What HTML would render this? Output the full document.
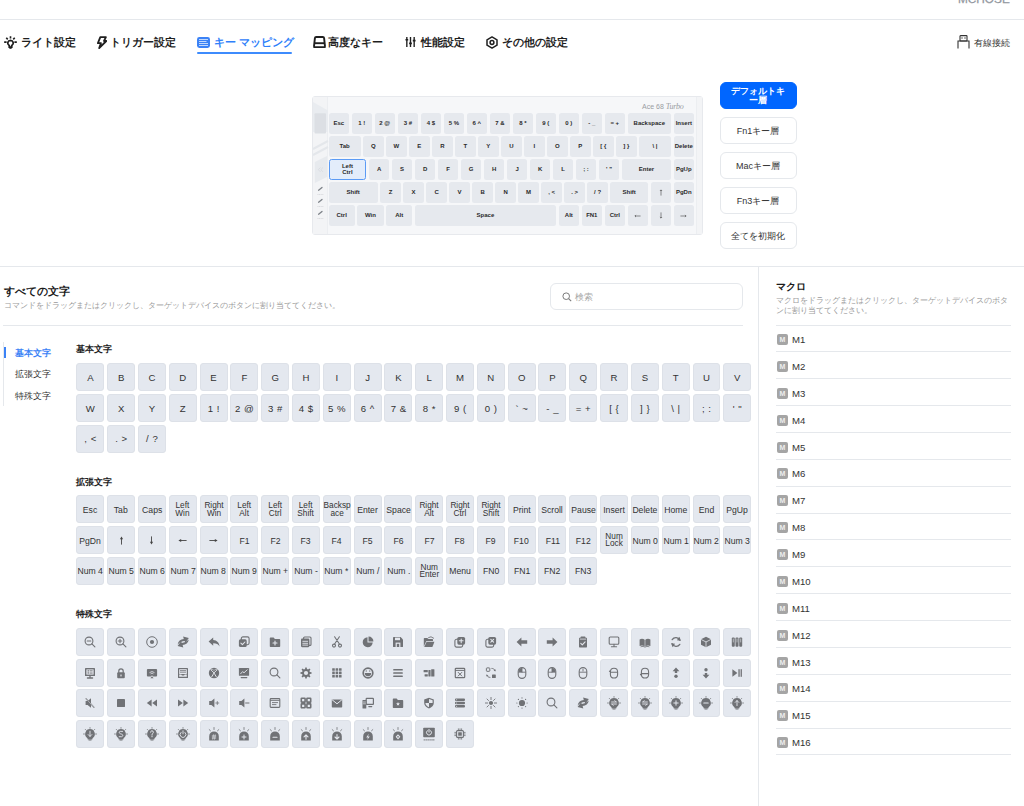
<!DOCTYPE html><html><head><meta charset="utf-8"><style>
*{box-sizing:border-box;margin:0;padding:0}
html,body{width:1024px;height:806px;overflow:hidden;background:#fff}
body{position:relative;font-family:"Liberation Sans",sans-serif;color:#222}
.abs{position:absolute}
.hl{position:absolute;height:1px;background:#e5e8ec}
.vl{position:absolute;width:1px;background:#e5e8ec}
.nav{position:absolute;top:34px;height:16px;font-size:10.8px;font-weight:bold;line-height:16px;white-space:nowrap;color:#1f1f1f}
.nav svg{position:absolute;top:2px;left:0}
.nav span{position:absolute;top:0}
.kb{position:absolute;left:312px;top:96px;width:391px;height:139px;background:#f6f7f9;border:1px solid #e7e9ed;border-radius:3px}
.kk{position:absolute;height:21px;background:#e6e9ee;border-radius:2.5px;font-size:6px;font-weight:bold;color:#2a2a2a;display:flex;align-items:center;justify-content:center;text-align:center;line-height:6.5px;white-space:nowrap}
.lbtn{position:absolute;left:719.5px;width:77px;height:27px;border:1px solid #e5e8ec;border-radius:6px;font-size:9px;color:#333;display:flex;align-items:center;justify-content:center;text-align:center;line-height:9px;background:#fff;padding-top:1.5px}
.lbtn.on{background:#0066ff;border-color:#0066ff;color:#fff;font-weight:bold;line-height:9.6px;padding-top:1px}
.key{position:absolute;width:27.9px;height:27.9px;background:#e4e8ef;border:1px solid #dde1e8;border-radius:3px;font-size:10px;color:#333;display:flex;align-items:center;justify-content:center;text-align:center;line-height:8.2px;white-space:nowrap}
.key .t{display:inline-block;transform:scaleX(.9);padding-top:1.5px;font-size:9.6px}
.key .t2{display:inline-block;font-size:8.6px;line-height:7.6px;padding-top:1px;transform:scaleX(.96)}
.kb9{font-size:10px}
.kb9 .t{transform:none;padding-top:1.5px;word-spacing:1px}
.key svg{display:block}
.sec{position:absolute;left:76px;font-size:9px;font-weight:bold;color:#222;line-height:10px}
.mac{position:absolute;left:776px;width:235px;height:26.8px;border-bottom:1px solid #e5e8ec}
.mac b{position:absolute;left:1px;top:8.5px;width:11px;height:11px;background:#a5a5a5;border-radius:2px;color:#eee;font-size:7px;line-height:11px;text-align:center;font-weight:bold}
.mac span{position:absolute;left:16px;top:8.5px;font-size:9.6px;line-height:12px;color:#333}
</style></head><body>
<div class="abs" style="left:958px;top:-6.6px;font-size:11.8px;line-height:12px;color:#91969e;font-weight:normal;-webkit-text-stroke:.25px #91969e;white-space:nowrap">MCHOSE</div>
<div class="hl" style="left:0;top:19px;width:1024px"></div>
<div class="nav" style="left:4px;color:#1f1f1f"><svg width="13" height="13" viewBox="0 0 16 16"><path d="M8 5.3a3.4 3.4 0 0 0-1.9 6.2c.3.2.4.5.4.9v1.3h3v-1.3c0-.4.1-.7.4-.9A3.4 3.4 0 0 0 8 5.3z" fill="none" stroke="#1f1f1f" stroke-width="2.2"/><path d="M6.6 14.8h2.8" stroke="#1f1f1f" stroke-width="2"/><path d="M8 .4v2.8M2.8 2.2l1.8 2M13.2 2.2l-1.8 2M.2 7.6h3M12.8 7.6h3" stroke="#1f1f1f" stroke-width="2"/></svg><span style="left:17px">ライト設定</span></div>
<div class="nav" style="left:96px;color:#1f1f1f"><svg width="11" height="13" viewBox="0 0 11 13"><path d="M4.3 1.1H9.9L8 5H10.3L3.2 12.1 4.9 7.2H1.9Z" fill="none" stroke="#1f1f1f" stroke-width="1.8" stroke-linejoin="round"/></svg><span style="left:14px">トリガー設定</span></div>
<div class="nav" style="left:197px;color:#2f80fa"><svg width="14" height="12" viewBox="0 0 14 12" style="top:3px"><rect x="0" y="0" width="13" height="11" rx="2.4" fill="#3b82f6"/><path d="M2 2.5h9M2 4.5h7.5M2 6.5h9M2 8.5h9" stroke="#dbe8fd" stroke-width=".85"/></svg><span style="left:17px">キー マッピング</span></div>
<div class="nav" style="left:313px;color:#1f1f1f"><svg width="13" height="12" viewBox="0 0 13 12"><path d="M3.2 1H9.8C10.6 1 11 1.4 11.1 2.2L12 10.4C12.1 11 11.8 11.2 11.3 11.2H1.7C1.2 11.2.9 11 1 10.4L1.9 2.2C2 1.4 2.4 1 3.2 1Z" fill="none" stroke="#1f1f1f" stroke-width="1.9"/><path d="M1.8 7.2H11.2" stroke="#1f1f1f" stroke-width="1.9"/></svg><span style="left:15px">高度なキー</span></div>
<div class="nav" style="left:405px;color:#1f1f1f"><svg width="11" height="12" viewBox="0 0 12 13"><path d="M2 1v11M6 1v11M10 1v11" stroke="#1f1f1f" stroke-width="1.5"/><path d="M.5 4h3M4.5 8h3M8.5 5h3" stroke="#1f1f1f" stroke-width="1.8"/></svg><span style="left:16px">性能設定</span></div>
<div class="nav" style="left:486px;color:#1f1f1f"><svg width="12" height="13" viewBox="0 0 12 13"><path d="M6 .9 11 3.8v5.4L6 12.1 1 9.2V3.8z" fill="none" stroke="#1f1f1f" stroke-width="1.5" stroke-linejoin="round"/><circle cx="6" cy="6.5" r="1.9" fill="none" stroke="#1f1f1f" stroke-width="1.5"/></svg><span style="left:16px">その他の設定</span></div>
<div class="abs" style="left:197px;top:52px;width:95px;height:2px;background:#3d8bfd;border-radius:1px"></div>
<div class="abs" style="left:957px;top:35px;width:13px;height:14px"><svg width="13" height="14" viewBox="0 0 13 14"><path d="M1 13.4V6H12v7.4" fill="none" stroke="#333" stroke-width="1.1"/><rect x="3" y=".6" width="7" height="5.4" rx=".6" fill="none" stroke="#333" stroke-width="1.1"/><rect x="4.4" y="2.4" width="1.2" height="1.2" fill="#333"/><rect x="7.4" y="2.4" width="1.2" height="1.2" fill="#333"/></svg></div>
<div class="abs" style="left:974px;top:36.5px;font-size:9.4px;line-height:12px;color:#333">有線接続</div>
<div class="kb">
<div class="abs" style="left:0;top:0;width:15px;height:137px;border-right:1px solid #eceef1;background:#f3f4f6"></div>
<svg class="abs" style="left:0;top:0" width="16" height="137" viewBox="0 0 16 137"><path d="M0 5 15 13.5V35H0z" fill="#e9ecf0"/><rect x="1.5" y="16.2" width="11.5" height="20.2" rx="1" fill="#dcdfe4"/><path d="M0 52 15 44M0 58 15 50" stroke="#e4e7eb" stroke-width="2"/><path d="M1.8 65 14 59V80L1.8 86z" fill="#e7eaee"/><path d="M7.5 70.5l-2.2 2.2 2.2 2.2M10 70.5l-2.2 2.2 2.2 2.2" stroke="#d6d9de" stroke-width=".7" fill="none"/><path d="M5.6 93.2l3.4-2.8M5.6 105.2l3.4-2.8M5.6 117.2l3.4-2.8" stroke="#7d8288" stroke-width="1.3" stroke-linecap="round"/><path d="M4.5 97.5h6M4.5 109.5h6M4.5 121.5h6" stroke="#cfd2d6" stroke-width=".8" stroke-dasharray="1 .6"/></svg>
<div class="kk" style="left:15.50px;top:15.80px;width:20.60px">Esc</div>
<div class="kk" style="left:38.50px;top:15.80px;width:20.60px">1 !</div>
<div class="kk" style="left:61.50px;top:15.80px;width:20.60px">2 @</div>
<div class="kk" style="left:84.50px;top:15.80px;width:20.60px">3 #</div>
<div class="kk" style="left:107.50px;top:15.80px;width:20.60px">4 $</div>
<div class="kk" style="left:130.50px;top:15.80px;width:20.60px">5 %</div>
<div class="kk" style="left:153.50px;top:15.80px;width:20.60px">6 ^</div>
<div class="kk" style="left:176.50px;top:15.80px;width:20.60px">7 &amp;</div>
<div class="kk" style="left:199.50px;top:15.80px;width:20.60px">8 *</div>
<div class="kk" style="left:222.50px;top:15.80px;width:20.60px">9 (</div>
<div class="kk" style="left:245.50px;top:15.80px;width:20.60px">0 )</div>
<div class="kk" style="left:268.50px;top:15.80px;width:20.60px">- _</div>
<div class="kk" style="left:291.50px;top:15.80px;width:20.60px">= +</div>
<div class="kk" style="left:314.50px;top:15.80px;width:43.60px">Backspace</div>
<div class="kk" style="left:360.50px;top:15.80px;width:20.60px">Insert</div>
<div class="kk" style="left:15.50px;top:38.88px;width:32.10px">Tab</div>
<div class="kk" style="left:50.00px;top:38.88px;width:20.60px">Q</div>
<div class="kk" style="left:73.00px;top:38.88px;width:20.60px">W</div>
<div class="kk" style="left:96.00px;top:38.88px;width:20.60px">E</div>
<div class="kk" style="left:119.00px;top:38.88px;width:20.60px">R</div>
<div class="kk" style="left:142.00px;top:38.88px;width:20.60px">T</div>
<div class="kk" style="left:165.00px;top:38.88px;width:20.60px">Y</div>
<div class="kk" style="left:188.00px;top:38.88px;width:20.60px">U</div>
<div class="kk" style="left:211.00px;top:38.88px;width:20.60px">I</div>
<div class="kk" style="left:234.00px;top:38.88px;width:20.60px">O</div>
<div class="kk" style="left:257.00px;top:38.88px;width:20.60px">P</div>
<div class="kk" style="left:280.00px;top:38.88px;width:20.60px">[ {</div>
<div class="kk" style="left:303.00px;top:38.88px;width:20.60px">] }</div>
<div class="kk" style="left:326.00px;top:38.88px;width:32.10px">\ |</div>
<div class="kk" style="left:360.50px;top:38.88px;width:20.60px">Delete</div>
<div class="kk" style="left:15.50px;top:61.96px;width:37.85px;background:#e3edfb;border:1px solid #5b9bf5">Left<br>Ctrl</div>
<div class="kk" style="left:55.75px;top:61.96px;width:20.60px">A</div>
<div class="kk" style="left:78.75px;top:61.96px;width:20.60px">S</div>
<div class="kk" style="left:101.75px;top:61.96px;width:20.60px">D</div>
<div class="kk" style="left:124.75px;top:61.96px;width:20.60px">F</div>
<div class="kk" style="left:147.75px;top:61.96px;width:20.60px">G</div>
<div class="kk" style="left:170.75px;top:61.96px;width:20.60px">H</div>
<div class="kk" style="left:193.75px;top:61.96px;width:20.60px">J</div>
<div class="kk" style="left:216.75px;top:61.96px;width:20.60px">K</div>
<div class="kk" style="left:239.75px;top:61.96px;width:20.60px">L</div>
<div class="kk" style="left:262.75px;top:61.96px;width:20.60px">; :</div>
<div class="kk" style="left:285.75px;top:61.96px;width:20.60px">&#x27; &quot;</div>
<div class="kk" style="left:308.75px;top:61.96px;width:49.35px">Enter</div>
<div class="kk" style="left:360.50px;top:61.96px;width:20.60px">PgUp</div>
<div class="kk" style="left:15.50px;top:85.04px;width:49.35px">Shift</div>
<div class="kk" style="left:67.25px;top:85.04px;width:20.60px">Z</div>
<div class="kk" style="left:90.25px;top:85.04px;width:20.60px">X</div>
<div class="kk" style="left:113.25px;top:85.04px;width:20.60px">C</div>
<div class="kk" style="left:136.25px;top:85.04px;width:20.60px">V</div>
<div class="kk" style="left:159.25px;top:85.04px;width:20.60px">B</div>
<div class="kk" style="left:182.25px;top:85.04px;width:20.60px">N</div>
<div class="kk" style="left:205.25px;top:85.04px;width:20.60px">M</div>
<div class="kk" style="left:228.25px;top:85.04px;width:20.60px">, &lt;</div>
<div class="kk" style="left:251.25px;top:85.04px;width:20.60px">. &gt;</div>
<div class="kk" style="left:274.25px;top:85.04px;width:20.60px">/ ?</div>
<div class="kk" style="left:297.25px;top:85.04px;width:37.85px">Shift</div>
<div class="kk" style="left:337.50px;top:85.04px;width:20.60px"><svg width="4" height="7" viewBox="0 0 4 7"><path d="M2 6.6V.9M.9 2 2 .9 3.1 2" fill="none" stroke="#444" stroke-width=".6"/></svg></div>
<div class="kk" style="left:360.50px;top:85.04px;width:20.60px">PgDn</div>
<div class="kk" style="left:15.50px;top:108.12px;width:26.35px">Ctrl</div>
<div class="kk" style="left:44.25px;top:108.12px;width:26.35px">Win</div>
<div class="kk" style="left:73.00px;top:108.12px;width:26.35px">Alt</div>
<div class="kk" style="left:101.75px;top:108.12px;width:141.35px">Space</div>
<div class="kk" style="left:245.50px;top:108.12px;width:20.60px">Alt</div>
<div class="kk" style="left:268.50px;top:108.12px;width:20.60px">FN1</div>
<div class="kk" style="left:291.50px;top:108.12px;width:20.60px">Ctrl</div>
<div class="kk" style="left:314.50px;top:108.12px;width:20.60px"><svg width="7" height="4" viewBox="0 0 7 4"><path d="M6.6 2H.9M2 .9.9 2 2 3.1" fill="none" stroke="#444" stroke-width=".6"/></svg></div>
<div class="kk" style="left:337.50px;top:108.12px;width:20.60px"><svg width="4" height="7" viewBox="0 0 4 7"><path d="M2 .4v5.7M.9 5 2 6.1 3.1 5" fill="none" stroke="#444" stroke-width=".6"/></svg></div>
<div class="kk" style="left:360.50px;top:108.12px;width:20.60px"><svg width="7" height="4" viewBox="0 0 7 4"><path d="M.4 2h5.7M5 .9 6.1 2 5 3.1" fill="none" stroke="#444" stroke-width=".6"/></svg></div>
<div class="abs" style="left:383px;top:0;width:6px;height:137px;border-left:1px solid #eceef1;background:#f3f4f6"></div>
<div class="abs" style="left:329px;top:5px;font-size:7px;color:#9a9da3;white-space:nowrap;letter-spacing:0">Ace 68 <i style="font-family:'Liberation Serif',serif;font-size:8px;letter-spacing:-.3px">Turbo</i></div>
</div>
<div class="lbtn on" style="top:82.2px">デフォルトキ<br>ー層</div>
<div class="lbtn" style="top:117.2px">Fn1キー層</div>
<div class="lbtn" style="top:152.1px">Macキー層</div>
<div class="lbtn" style="top:187.1px">Fn3キー層</div>
<div class="lbtn" style="top:222.0px">全てを初期化</div>
<div class="hl" style="left:0;top:266px;width:1024px"></div>
<div class="vl" style="left:758px;top:266px;height:540px"></div>
<div class="abs" style="left:4px;top:283.5px;font-size:10.5px;font-weight:bold;line-height:14px;color:#1a1a1a">すべての文字</div>
<div class="abs" style="left:4px;top:301px;font-size:8.1px;line-height:10px;color:#9a9a9a;white-space:nowrap">コマンドをドラッグまたはクリックし、ターゲットデバイスのボタンに割り当ててください。</div>
<div class="abs" style="left:550px;top:282.5px;width:193px;height:27px;border:1px solid #e5e8ec;border-radius:6px"><svg class="abs" style="left:11px;top:8px" width="10" height="10" viewBox="0 0 10 10"><circle cx="4.2" cy="4.2" r="3.3" fill="none" stroke="#7a7a7a" stroke-width="1"/><path d="M6.6 6.6 9.2 9.2" stroke="#7a7a7a" stroke-width="1.1"/></svg><span class="abs" style="left:23.5px;top:7.5px;font-size:8.8px;line-height:12px;color:#a8a8a8">検索</span></div>
<div class="hl" style="left:3px;top:325px;width:740px"></div>
<div class="vl" style="left:3px;top:342px;height:64px"></div>
<div class="abs" style="left:3.5px;top:347px;width:2px;height:11px;background:#3b82f6"></div>
<div class="abs" style="left:15px;top:347px;font-size:9px;line-height:12px;color:#3b82f6;font-weight:bold">基本文字</div>
<div class="abs" style="left:15px;top:368px;font-size:9px;line-height:12px;color:#333">拡張文字</div>
<div class="abs" style="left:15px;top:390px;font-size:9px;line-height:12px;color:#333">特殊文字</div>
<div class="sec" style="top:343.5px">基本文字</div>
<div class="key kb9" style="left:76.40px;top:363.20px"><span class="t">A</span></div>
<div class="key kb9" style="left:107.21px;top:363.20px"><span class="t">B</span></div>
<div class="key kb9" style="left:138.01px;top:363.20px"><span class="t">C</span></div>
<div class="key kb9" style="left:168.82px;top:363.20px"><span class="t">D</span></div>
<div class="key kb9" style="left:199.62px;top:363.20px"><span class="t">E</span></div>
<div class="key kb9" style="left:230.43px;top:363.20px"><span class="t">F</span></div>
<div class="key kb9" style="left:261.24px;top:363.20px"><span class="t">G</span></div>
<div class="key kb9" style="left:292.04px;top:363.20px"><span class="t">H</span></div>
<div class="key kb9" style="left:322.85px;top:363.20px"><span class="t">I</span></div>
<div class="key kb9" style="left:353.65px;top:363.20px"><span class="t">J</span></div>
<div class="key kb9" style="left:384.46px;top:363.20px"><span class="t">K</span></div>
<div class="key kb9" style="left:415.27px;top:363.20px"><span class="t">L</span></div>
<div class="key kb9" style="left:446.07px;top:363.20px"><span class="t">M</span></div>
<div class="key kb9" style="left:476.88px;top:363.20px"><span class="t">N</span></div>
<div class="key kb9" style="left:507.68px;top:363.20px"><span class="t">O</span></div>
<div class="key kb9" style="left:538.49px;top:363.20px"><span class="t">P</span></div>
<div class="key kb9" style="left:569.30px;top:363.20px"><span class="t">Q</span></div>
<div class="key kb9" style="left:600.10px;top:363.20px"><span class="t">R</span></div>
<div class="key kb9" style="left:630.91px;top:363.20px"><span class="t">S</span></div>
<div class="key kb9" style="left:661.71px;top:363.20px"><span class="t">T</span></div>
<div class="key kb9" style="left:692.52px;top:363.20px"><span class="t">U</span></div>
<div class="key kb9" style="left:723.33px;top:363.20px"><span class="t">V</span></div>
<div class="key kb9" style="left:76.40px;top:394.01px"><span class="t">W</span></div>
<div class="key kb9" style="left:107.21px;top:394.01px"><span class="t">X</span></div>
<div class="key kb9" style="left:138.01px;top:394.01px"><span class="t">Y</span></div>
<div class="key kb9" style="left:168.82px;top:394.01px"><span class="t">Z</span></div>
<div class="key kb9" style="left:199.62px;top:394.01px"><span class="t">1 !</span></div>
<div class="key kb9" style="left:230.43px;top:394.01px"><span class="t">2 @</span></div>
<div class="key kb9" style="left:261.24px;top:394.01px"><span class="t">3 #</span></div>
<div class="key kb9" style="left:292.04px;top:394.01px"><span class="t">4 $</span></div>
<div class="key kb9" style="left:322.85px;top:394.01px"><span class="t">5 %</span></div>
<div class="key kb9" style="left:353.65px;top:394.01px"><span class="t">6 ^</span></div>
<div class="key kb9" style="left:384.46px;top:394.01px"><span class="t">7 &amp;</span></div>
<div class="key kb9" style="left:415.27px;top:394.01px"><span class="t">8 *</span></div>
<div class="key kb9" style="left:446.07px;top:394.01px"><span class="t">9 (</span></div>
<div class="key kb9" style="left:476.88px;top:394.01px"><span class="t">0 )</span></div>
<div class="key kb9" style="left:507.68px;top:394.01px"><span class="t">` ~</span></div>
<div class="key kb9" style="left:538.49px;top:394.01px"><span class="t">- _</span></div>
<div class="key kb9" style="left:569.30px;top:394.01px"><span class="t">= +</span></div>
<div class="key kb9" style="left:600.10px;top:394.01px"><span class="t">[ {</span></div>
<div class="key kb9" style="left:630.91px;top:394.01px"><span class="t">] }</span></div>
<div class="key kb9" style="left:661.71px;top:394.01px"><span class="t">\ |</span></div>
<div class="key kb9" style="left:692.52px;top:394.01px"><span class="t">; :</span></div>
<div class="key kb9" style="left:723.33px;top:394.01px"><span class="t">' "</span></div>
<div class="key kb9" style="left:76.40px;top:424.81px"><span class="t">, &lt;</span></div>
<div class="key kb9" style="left:107.21px;top:424.81px"><span class="t">. &gt;</span></div>
<div class="key kb9" style="left:138.01px;top:424.81px"><span class="t">/ ?</span></div>
<div class="sec" style="top:476.5px">拡張文字</div>
<div class="key " style="left:76.40px;top:495.20px"><span class="t">Esc</span></div>
<div class="key " style="left:107.21px;top:495.20px"><span class="t">Tab</span></div>
<div class="key " style="left:138.01px;top:495.20px"><span class="t">Caps</span></div>
<div class="key " style="left:168.82px;top:495.20px"><span class="t2">Left<br>Win</span></div>
<div class="key " style="left:199.62px;top:495.20px"><span class="t2">Right<br>Win</span></div>
<div class="key " style="left:230.43px;top:495.20px"><span class="t2">Left<br>Alt</span></div>
<div class="key " style="left:261.24px;top:495.20px"><span class="t2">Left<br>Ctrl</span></div>
<div class="key " style="left:292.04px;top:495.20px"><span class="t2">Left<br>Shift</span></div>
<div class="key " style="left:322.85px;top:495.20px"><span class="t2">Backsp<br>ace</span></div>
<div class="key " style="left:353.65px;top:495.20px"><span class="t">Enter</span></div>
<div class="key " style="left:384.46px;top:495.20px"><span class="t">Space</span></div>
<div class="key " style="left:415.27px;top:495.20px"><span class="t2">Right<br>Alt</span></div>
<div class="key " style="left:446.07px;top:495.20px"><span class="t2">Right<br>Ctrl</span></div>
<div class="key " style="left:476.88px;top:495.20px"><span class="t2">Right<br>Shift</span></div>
<div class="key " style="left:507.68px;top:495.20px"><span class="t">Print</span></div>
<div class="key " style="left:538.49px;top:495.20px"><span class="t">Scroll</span></div>
<div class="key " style="left:569.30px;top:495.20px"><span class="t">Pause</span></div>
<div class="key " style="left:600.10px;top:495.20px"><span class="t">Insert</span></div>
<div class="key " style="left:630.91px;top:495.20px"><span class="t">Delete</span></div>
<div class="key " style="left:661.71px;top:495.20px"><span class="t">Home</span></div>
<div class="key " style="left:692.52px;top:495.20px"><span class="t">End</span></div>
<div class="key " style="left:723.33px;top:495.20px"><span class="t">PgUp</span></div>
<div class="key " style="left:76.40px;top:526.01px"><span class="t">PgDn</span></div>
<div class="key " style="left:107.21px;top:526.01px"><svg width="5" height="9" viewBox="0 0 5 9" style="margin-top:1px"><path d="M2.5 8.6V2.4" stroke="#444" stroke-width=".9"/><path d="M.9 3.2 2.5.4 4.1 3.2z" fill="#444"/></svg></div>
<div class="key " style="left:138.01px;top:526.01px"><svg width="5" height="9" viewBox="0 0 5 9" style="margin-top:1px"><path d="M2.5.4v6.2" stroke="#444" stroke-width=".9"/><path d="M.9 5.8 2.5 8.6 4.1 5.8z" fill="#444"/></svg></div>
<div class="key " style="left:168.82px;top:526.01px"><svg width="9" height="5" viewBox="0 0 9 5" style="margin-top:1px"><path d="M8.6 2.5H2.4" stroke="#444" stroke-width=".9"/><path d="M3.2.9.4 2.5 3.2 4.1z" fill="#444"/></svg></div>
<div class="key " style="left:199.62px;top:526.01px"><svg width="9" height="5" viewBox="0 0 9 5" style="margin-top:1px"><path d="M.4 2.5h6.2" stroke="#444" stroke-width=".9"/><path d="M5.8.9 8.6 2.5 5.8 4.1z" fill="#444"/></svg></div>
<div class="key " style="left:230.43px;top:526.01px"><span class="t">F1</span></div>
<div class="key " style="left:261.24px;top:526.01px"><span class="t">F2</span></div>
<div class="key " style="left:292.04px;top:526.01px"><span class="t">F3</span></div>
<div class="key " style="left:322.85px;top:526.01px"><span class="t">F4</span></div>
<div class="key " style="left:353.65px;top:526.01px"><span class="t">F5</span></div>
<div class="key " style="left:384.46px;top:526.01px"><span class="t">F6</span></div>
<div class="key " style="left:415.27px;top:526.01px"><span class="t">F7</span></div>
<div class="key " style="left:446.07px;top:526.01px"><span class="t">F8</span></div>
<div class="key " style="left:476.88px;top:526.01px"><span class="t">F9</span></div>
<div class="key " style="left:507.68px;top:526.01px"><span class="t">F10</span></div>
<div class="key " style="left:538.49px;top:526.01px"><span class="t">F11</span></div>
<div class="key " style="left:569.30px;top:526.01px"><span class="t">F12</span></div>
<div class="key " style="left:600.10px;top:526.01px"><span class="t2">Num<br>Lock</span></div>
<div class="key " style="left:630.91px;top:526.01px"><span class="t">Num 0</span></div>
<div class="key " style="left:661.71px;top:526.01px"><span class="t">Num 1</span></div>
<div class="key " style="left:692.52px;top:526.01px"><span class="t">Num 2</span></div>
<div class="key " style="left:723.33px;top:526.01px"><span class="t">Num 3</span></div>
<div class="key " style="left:76.40px;top:556.81px"><span class="t">Num 4</span></div>
<div class="key " style="left:107.21px;top:556.81px"><span class="t">Num 5</span></div>
<div class="key " style="left:138.01px;top:556.81px"><span class="t">Num 6</span></div>
<div class="key " style="left:168.82px;top:556.81px"><span class="t">Num 7</span></div>
<div class="key " style="left:199.62px;top:556.81px"><span class="t">Num 8</span></div>
<div class="key " style="left:230.43px;top:556.81px"><span class="t">Num 9</span></div>
<div class="key " style="left:261.24px;top:556.81px"><span class="t">Num +</span></div>
<div class="key " style="left:292.04px;top:556.81px"><span class="t">Num -</span></div>
<div class="key " style="left:322.85px;top:556.81px"><span class="t">Num *</span></div>
<div class="key " style="left:353.65px;top:556.81px"><span class="t">Num /</span></div>
<div class="key " style="left:384.46px;top:556.81px"><span class="t">Num .</span></div>
<div class="key " style="left:415.27px;top:556.81px"><span class="t2">Num<br>Enter</span></div>
<div class="key " style="left:446.07px;top:556.81px"><span class="t">Menu</span></div>
<div class="key " style="left:476.88px;top:556.81px"><span class="t">FN0</span></div>
<div class="key " style="left:507.68px;top:556.81px"><span class="t">FN1</span></div>
<div class="key " style="left:538.49px;top:556.81px"><span class="t">FN2</span></div>
<div class="key " style="left:569.30px;top:556.81px"><span class="t">FN3</span></div>
<div class="sec" style="top:608.5px">特殊文字</div>
<div class="key " style="left:76.40px;top:627.80px"><svg width="12" height="12" viewBox="0 0 12 12"><circle cx="5" cy="5" r="3.9" fill="none" stroke="#707276" stroke-width="1.1"/><path d="M7.9 7.9 10.9 10.9M3.2 5h3.6" fill="none" stroke="#707276" stroke-width="1.1" stroke-linecap="round" stroke-linejoin="round"/></svg></div>
<div class="key " style="left:107.21px;top:627.80px"><svg width="12" height="12" viewBox="0 0 12 12"><circle cx="5" cy="5" r="3.9" fill="none" stroke="#707276" stroke-width="1.1"/><path d="M7.9 7.9 10.9 10.9M3.2 5h3.6M5 3.2v3.6" fill="none" stroke="#707276" stroke-width="1.1" stroke-linecap="round" stroke-linejoin="round"/></svg></div>
<div class="key " style="left:138.01px;top:627.80px"><svg width="12" height="12" viewBox="0 0 12 12"><circle cx="6" cy="6" r="5.3" fill="none" stroke="#707276" stroke-width="1"/><circle cx="6" cy="6" r="2.1" fill="#707276"/></svg></div>
<div class="key " style="left:168.82px;top:627.80px"><svg width="12" height="12" viewBox="0 0 12 12"><path d="M.6 8.4C1.1 5 3.6 3.2 6.8 3L6.1.6 11.8 2 8.4 6.8 7.6 5C5 5.2 2.8 6.4.6 8.4Z" fill="#707276"/><path d="M11.8 3.6C11.3 7 8.8 8.8 5.6 9L6.3 11.4.6 10 4 5.2 4.8 7C7.4 6.8 9.6 5.6 11.8 3.6Z" fill="#707276"/></svg></div>
<div class="key " style="left:199.62px;top:627.80px"><svg width="12" height="12" viewBox="0 0 12 12"><path d="M5.2 1.4 .6 5.6 5.2 9.8V7.2C8.2 7.1 10.2 8.1 11.6 10.6 11.2 6.6 9 4.3 5.2 4z" fill="#707276"/></svg></div>
<div class="key " style="left:230.43px;top:627.80px"><svg width="12" height="12" viewBox="0 0 12 12"><rect x="3.3" y="0.9" width="7.8" height="7.8" rx="1.6" fill="none" stroke="#707276" stroke-width="1.1"/><rect x="0.9" y="3.3" width="7.8" height="7.8" rx="1.6" fill="#707276"/><path d="M2.9 7.2l1.5 1.5 2.5-2.7" fill="none" stroke="#e4e7ed" stroke-width="1.1" stroke-linecap="round" stroke-linejoin="round"/></svg></div>
<div class="key " style="left:261.24px;top:627.80px"><svg width="12" height="12" viewBox="0 0 12 12"><path d="M.8 2.2C.8 1.8 1.1 1.5 1.5 1.5H4.6L5.9 3H10.5C10.9 3 11.2 3.3 11.2 3.7V10.3C11.2 10.7 10.9 11 10.5 11H1.5C1.1 11 .8 10.7.8 10.3Z" fill="#707276"/><path d="M6 5v4M4 7h4" fill="none" stroke="#e4e7ed" stroke-width="1.1" stroke-linecap="round" stroke-linejoin="round"/></svg></div>
<div class="key " style="left:292.04px;top:627.80px"><svg width="12" height="12" viewBox="0 0 12 12"><rect x="3.6" y="1" width="7.4" height="8.4" rx="1" fill="none" stroke="#707276" stroke-width="1.1"/><rect x="1" y="2.6" width="8.4" height="8.6" rx="1.1" fill="#707276"/><path d="M2.8 5.3h4.8M2.8 7.3h4.8M2.8 9.1h4.8" fill="none" stroke="#e4e7ed" stroke-width="0.9" stroke-linecap="round" stroke-linejoin="round"/></svg></div>
<div class="key " style="left:322.85px;top:627.80px"><svg width="12" height="12" viewBox="0 0 12 12"><path d="M3.6 .8l4.8 7.2M8.4 .8 3.6 8" fill="none" stroke="#707276" stroke-width="1.1" stroke-linecap="round" stroke-linejoin="round"/><circle cx="3" cy="9.6" r="1.5" fill="none" stroke="#707276" stroke-width="1.1"/><circle cx="9" cy="9.6" r="1.5" fill="none" stroke="#707276" stroke-width="1.1"/></svg></div>
<div class="key " style="left:353.65px;top:627.80px"><svg width="12" height="12" viewBox="0 0 12 12"><path d="M5.5 1.3a5 5 0 1 0 5.2 5.2H5.5z" fill="#707276"/><path d="M6.5 .6a4.7 4.7 0 0 1 4.9 4.9H6.5z" fill="#707276"/></svg></div>
<div class="key " style="left:384.46px;top:627.80px"><svg width="12" height="12" viewBox="0 0 12 12"><path d="M1 1.6C1 1.2 1.3 1 1.6 1H8.6L11 3.4V10.4C11 10.8 10.7 11 10.4 11H1.6C1.3 11 1 10.8 1 10.4Z" fill="#707276"/><rect x="3" y="1.6" width="5" height="2.6" rx="0" fill="#e4e7ed"/><rect x="3.6" y="6.6" width="4.8" height="4.4" rx="0" fill="#e4e7ed"/><rect x="4.8" y="7.8" width="2.4" height="3.2" rx="0" fill="#707276"/></svg></div>
<div class="key " style="left:415.27px;top:627.80px"><svg width="12" height="12" viewBox="0 0 12 12"><path d="M.8 2.6C.8 2.2 1.1 1.9 1.5 1.9H4.3L5.4 3.1H9.4C9.8 3.1 10 3.4 10 3.8V5H3.4L.8 10.5Z" fill="#707276"/><path d="M3.6 5.8H11.4L9.4 10.9H1.2Z" fill="#707276"/><path d="M5.6 1.6 8 .8 10.6 2.2" fill="none" stroke="#707276" stroke-width="0.9" stroke-linecap="round" stroke-linejoin="round"/></svg></div>
<div class="key " style="left:446.07px;top:627.80px"><svg width="12" height="12" viewBox="0 0 12 12"><rect x="0.9" y="3.3" width="7.8" height="7.8" rx="1.6" fill="none" stroke="#707276" stroke-width="1.1"/><rect x="3.3" y="0.9" width="7.8" height="7.8" rx="1.6" fill="#707276"/><path d="M7.2 3v3.8M5.3 4.8h3.8" fill="none" stroke="#e4e7ed" stroke-width="1.1" stroke-linecap="round" stroke-linejoin="round"/></svg></div>
<div class="key " style="left:476.88px;top:627.80px"><svg width="12" height="12" viewBox="0 0 12 12"><rect x="0.9" y="3.3" width="7.8" height="7.8" rx="1.6" fill="none" stroke="#707276" stroke-width="1.1"/><rect x="3.3" y="0.9" width="7.8" height="7.8" rx="1.6" fill="#707276"/><path d="M5.8 3.4l2.8 2.8M8.6 3.4 5.8 6.2" fill="none" stroke="#e4e7ed" stroke-width="1.1" stroke-linecap="round" stroke-linejoin="round"/></svg></div>
<div class="key " style="left:507.68px;top:627.80px"><svg width="12" height="12" viewBox="0 0 12 12"><path d="M.6 6 5.4 1.6V4.2H11.2V7.8H5.4V10.4Z" fill="#707276"/></svg></div>
<div class="key " style="left:538.49px;top:627.80px"><svg width="12" height="12" viewBox="0 0 12 12"><path d="M11.4 6 6.6 1.6V4.2H.8V7.8H6.6V10.4Z" fill="#707276"/></svg></div>
<div class="key " style="left:569.30px;top:627.80px"><svg width="12" height="12" viewBox="0 0 12 12"><path d="M2 2.4C2 2 2.3 1.8 2.6 1.8H3.8V1.2H8.2V1.8H9.4C9.7 1.8 10 2 10 2.4V10.8C10 11.2 9.7 11.4 9.4 11.4H2.6C2.3 11.4 2 11.2 2 10.8Z" fill="#707276"/><rect x="3.6" y="0.6" width="4.8" height="1.8" rx="0.5" fill="#707276"/><path d="M3.8 7.3l1.5 1.5 2.8-3" fill="none" stroke="#e4e7ed" stroke-width="1.1" stroke-linecap="round" stroke-linejoin="round"/><path d="M3.2 3.1h5.6" fill="none" stroke="#e4e7ed" stroke-width="0.8" stroke-linecap="round" stroke-linejoin="round"/></svg></div>
<div class="key " style="left:600.10px;top:627.80px"><svg width="12" height="12" viewBox="0 0 12 12"><rect x="1.2" y="1" width="9.6" height="7.2" rx="1" fill="none" stroke="#707276" stroke-width="1.1"/><path d="M6 8.4v2.2M3.4 10.8h5.2" fill="none" stroke="#707276" stroke-width="1.1" stroke-linecap="round" stroke-linejoin="round"/></svg></div>
<div class="key " style="left:630.91px;top:627.80px"><svg width="12" height="12" viewBox="0 0 12 12"><path d="M.6 3.4C2.4 2.4 4.4 2.6 5.7 3.8V10.4C4.4 9.4 2.4 9.2.6 10.1Z" fill="#707276"/><path d="M11.4 3.4C9.6 2.4 7.6 2.6 6.3 3.8V10.4C7.6 9.4 9.6 9.2 11.4 10.1Z" fill="#707276"/><path d="M2 10.7C3.4 10.2 4.8 10.4 6 11.2 7.2 10.4 8.6 10.2 10 10.7" fill="none" stroke="#707276" stroke-width="0.8" stroke-linecap="round" stroke-linejoin="round"/></svg></div>
<div class="key " style="left:661.71px;top:627.80px"><svg width="12" height="12" viewBox="0 0 12 12"><path d="M9.9 4.2A4.4 4.4 0 0 0 2.2 3.6M2.1 7.8A4.4 4.4 0 0 0 9.8 8.4" fill="none" stroke="#707276" stroke-width="1.3" stroke-linecap="round" stroke-linejoin="round"/><path d="M9.4 .8 10.9 4.8 6.9 4.2Z" fill="#707276"/><path d="M2.6 11.2 1.1 7.2 5.1 7.8Z" fill="#707276"/></svg></div>
<div class="key " style="left:692.52px;top:627.80px"><svg width="12" height="12" viewBox="0 0 12 12"><path d="M6 .8 11 3.3V8.8L6 11.2 1 8.8V3.3Z" fill="#707276"/><path d="M1.4 3.6 6 6 10.6 3.6M6 6v5" fill="none" stroke="#e4e7ed" stroke-width="0.8" stroke-linecap="round" stroke-linejoin="round"/></svg></div>
<div class="key " style="left:723.33px;top:627.80px"><svg width="12" height="12" viewBox="0 0 12 12"><rect x="0.8" y="1.4" width="3" height="9.4" rx="1" fill="#707276"/><rect x="4.5" y="1.4" width="3" height="9.4" rx="1" fill="#707276"/><rect x="8.2" y="1.4" width="3" height="9.4" rx="1" fill="#707276"/><path d="M2.3 3v3M6 3v3M9.7 3v3" fill="none" stroke="#e4e7ed" stroke-width="0.6" stroke-linecap="round" stroke-linejoin="round"/></svg></div>
<div class="key " style="left:76.40px;top:658.61px"><svg width="12" height="12" viewBox="0 0 12 12"><path d="M1 1.6C1 1.2 1.2 1 1.6 1H10.4C10.8 1 11 1.2 11 1.6V8.4C11 8.8 10.8 9 10.4 9H1.6C1.2 9 1 8.8 1 8.4Z" fill="#707276"/><rect x="2.4" y="2.4" width="7.2" height="5.2" rx="0" fill="#e4e7ed"/><rect x="3.6" y="3.2" width="1.3" height="1.3" rx="0" fill="#707276"/><rect x="3.6" y="5.3" width="1.3" height="1.3" rx="0" fill="#707276"/><rect x="5.6" y="3.4" width="3" height="0.9" rx="0" fill="#707276"/><rect x="5.6" y="5.6" width="3" height="0.9" rx="0" fill="#707276"/><path d="M6 9v1.6M3.4 11h5.2" fill="none" stroke="#707276" stroke-width="1.3" stroke-linecap="round" stroke-linejoin="round"/></svg></div>
<div class="key " style="left:107.21px;top:658.61px"><svg width="12" height="12" viewBox="0 0 12 12"><path d="M3.8 5.4V4a2.2 2.2 0 0 1 4.4 0v1.4" fill="none" stroke="#707276" stroke-width="1.2" stroke-linecap="round" stroke-linejoin="round"/><rect x="2.2" y="5.3" width="7.6" height="6" rx="1" fill="#707276"/><rect x="5.4" y="7.4" width="1.2" height="2" rx="0.3" fill="#e4e7ed"/></svg></div>
<div class="key " style="left:138.01px;top:658.61px"><svg width="12" height="12" viewBox="0 0 12 12"><rect x="0.9" y="2" width="10.2" height="7.6" rx="1" fill="#707276"/><path d="M3.8 5.4a3.2 3.2 0 0 1 4.4 0M4.8 6.6a1.6 1.6 0 0 1 2.4 0" fill="none" stroke="#e4e7ed" stroke-width="0.8" stroke-linecap="round" stroke-linejoin="round"/><path d="M6 8.2 8.4 11.2H3.6Z" fill="#e4e7ed"/><path d="M6 9.2 7.6 11.2H4.4Z" fill="#707276"/></svg></div>
<div class="key " style="left:168.82px;top:658.61px"><svg width="12" height="12" viewBox="0 0 12 12"><path d="M1 1.6C1 1.2 1.2 1 1.6 1H10.4C10.8 1 11 1.2 11 1.6V10.4C11 10.8 10.8 11 10.4 11H1.6C1.2 11 1 10.8 1 10.4Z" fill="#707276"/><rect x="2.2" y="2.2" width="7.6" height="4.8" rx="0" fill="#e4e7ed"/><path d="M3.4 3.6h5.2M3.4 5.2h5.2" fill="none" stroke="#707276" stroke-width="0.8" stroke-linecap="round" stroke-linejoin="round"/><path d="M2.2 7.4H4.2L5 8.6H7L7.8 7.4H9.8V9.8H2.2Z" fill="#e4e7ed"/></svg></div>
<div class="key " style="left:199.62px;top:658.61px"><svg width="12" height="12" viewBox="0 0 12 12"><circle cx="6" cy="6" r="5.2" fill="#707276"/><path d="M2.8 2.8C4.4 4 6 5.6 8.2 9.6M9.2 2.8C7.6 4 6 5.6 3.8 9.6" fill="none" stroke="#e4e7ed" stroke-width="1" stroke-linecap="round" stroke-linejoin="round"/><path d="M3.4 2.4C4.6 2.2 5.4 2.6 6 3.4 6.6 2.6 7.4 2.2 8.6 2.4" fill="none" stroke="#e4e7ed" stroke-width="0.6" stroke-linecap="round" stroke-linejoin="round"/></svg></div>
<div class="key " style="left:230.43px;top:658.61px"><svg width="12" height="12" viewBox="0 0 12 12"><path d="M.9 1.6C.9 1.2 1.2 1 1.6 1H10.4C10.8 1 11.1 1.2 11.1 1.6V8.2C11.1 8.6 10.8 8.8 10.4 8.8H1.6C1.2 8.8.9 8.6.9 8.2Z" fill="#707276"/><path d="M2.6 6.8 4.6 4.6 6 5.8 9.2 2.8" fill="none" stroke="#e4e7ed" stroke-width="0.9" stroke-linecap="round" stroke-linejoin="round"/><path d="M3.2 10.6h5.6" fill="none" stroke="#707276" stroke-width="1.2" stroke-linecap="round" stroke-linejoin="round"/></svg></div>
<div class="key " style="left:261.24px;top:658.61px"><svg width="12" height="12" viewBox="0 0 12 12"><circle cx="5" cy="5" r="3.9" fill="none" stroke="#707276" stroke-width="1.1"/><path d="M7.9 7.9 10.9 10.9" fill="none" stroke="#707276" stroke-width="1.1" stroke-linecap="round" stroke-linejoin="round"/></svg></div>
<div class="key " style="left:292.04px;top:658.61px"><svg width="12" height="12" viewBox="0 0 12 12"><path d="M9.89 5.07L11.55 5.25L11.55 6.75L9.89 6.93L9.41 8.09L10.45 9.40L9.40 10.45L8.09 9.41L6.93 9.89L6.75 11.55L5.25 11.55L5.07 9.89L3.91 9.41L2.60 10.45L1.55 9.40L2.59 8.09L2.11 6.93L0.45 6.75L0.45 5.25L2.11 5.07L2.59 3.91L1.55 2.60L2.60 1.55L3.91 2.59L5.07 2.11L5.25 0.45L6.75 0.45L6.93 2.11L8.09 2.59L9.40 1.55L10.45 2.60L9.41 3.91Z" fill="#707276"/><circle cx="6" cy="6" r="2.1" fill="#e4e7ed"/></svg></div>
<div class="key " style="left:322.85px;top:658.61px"><svg width="12" height="12" viewBox="0 0 12 12"><rect x="1.2" y="1.2" width="2.6" height="2.6" rx="0.3" fill="#707276"/><rect x="1.2" y="4.6" width="2.6" height="2.6" rx="0.3" fill="#707276"/><rect x="1.2" y="8.0" width="2.6" height="2.6" rx="0.3" fill="#707276"/><rect x="4.6" y="1.2" width="2.6" height="2.6" rx="0.3" fill="#707276"/><rect x="4.6" y="4.6" width="2.6" height="2.6" rx="0.3" fill="#707276"/><rect x="4.6" y="8.0" width="2.6" height="2.6" rx="0.3" fill="#707276"/><rect x="8.0" y="1.2" width="2.6" height="2.6" rx="0.3" fill="#707276"/><rect x="8.0" y="4.6" width="2.6" height="2.6" rx="0.3" fill="#707276"/><rect x="8.0" y="8.0" width="2.6" height="2.6" rx="0.3" fill="#707276"/></svg></div>
<div class="key " style="left:353.65px;top:658.61px"><svg width="12" height="12" viewBox="0 0 12 12"><circle cx="6" cy="6" r="4.8" fill="none" stroke="#707276" stroke-width="1.7"/><path d="M2.8 6H9.2A3.2 3.2 0 0 1 2.8 6Z" fill="#707276"/><rect x="3.6" y="3.4" width="1.4" height="1.1" rx="0.3" fill="#707276"/><rect x="7" y="3.4" width="1.4" height="1.1" rx="0.3" fill="#707276"/></svg></div>
<div class="key " style="left:384.46px;top:658.61px"><svg width="12" height="12" viewBox="0 0 12 12"><rect x="1.2" y="2" width="9.6" height="1.6" rx="0.5" fill="#707276"/><rect x="1.2" y="5.2" width="9.6" height="1.6" rx="0.5" fill="#707276"/><rect x="1.2" y="8.4" width="9.6" height="1.6" rx="0.5" fill="#707276"/></svg></div>
<div class="key " style="left:415.27px;top:658.61px"><svg width="12" height="12" viewBox="0 0 12 12"><rect x="0.6" y="3" width="4.2" height="2.2" rx="0.3" fill="#707276"/><rect x="1.6" y="7.2" width="3.2" height="2.2" rx="0.3" fill="#707276"/><rect x="5.4" y="3" width="2.2" height="6.4" rx="0.3" fill="#707276"/><rect x="8.2" y="2.2" width="3.2" height="7.4" rx="0.3" fill="#707276"/></svg></div>
<div class="key " style="left:446.07px;top:658.61px"><svg width="12" height="12" viewBox="0 0 12 12"><rect x="1.3" y="1.3" width="9.4" height="9.4" rx="0.8" fill="none" stroke="#707276" stroke-width="1.2"/><path d="M1.6 3.4h8.8" fill="none" stroke="#707276" stroke-width="1" stroke-linecap="round" stroke-linejoin="round"/><path d="M4.2 5.4l3.6 3.6M7.8 5.4 4.2 9" fill="none" stroke="#707276" stroke-width="1" stroke-linecap="round" stroke-linejoin="round"/></svg></div>
<div class="key " style="left:476.88px;top:658.61px"><svg width="12" height="12" viewBox="0 0 12 12"><rect x="1.4" y="0.9" width="3.4" height="3.4" rx="0.6" fill="none" stroke="#707276" stroke-width="1"/><rect x="7" y="7.4" width="3.8" height="3.6" rx="0.6" fill="#707276"/><path d="M6.8 1.4c1.6 0 2.8.8 3.2 2.2M5 10.4c-1.6 0-2.8-.8-3.2-2.2" fill="none" stroke="#707276" stroke-width="0.9" stroke-linecap="round" stroke-linejoin="round"/><path d="M10.6 2.2 10.4 4.4 8.6 3.4Z" fill="#707276"/><path d="M1.4 9.6 1.6 7.4 3.4 8.4Z" fill="#707276"/></svg></div>
<div class="key " style="left:507.68px;top:658.61px"><svg width="12" height="12" viewBox="0 0 12 12"><rect x="2.2" y="0.6" width="7.6" height="10.8" rx="3.8" fill="none" stroke="#707276" stroke-width="1.1"/><path d="M2.7 5V4.4A3.3 3.3 0 0 1 6 1.1V5Z" fill="#707276"/><path d="M2.6 5.2h6.8M6 1v4.2" fill="none" stroke="#707276" stroke-width="0.9" stroke-linecap="round" stroke-linejoin="round"/></svg></div>
<div class="key " style="left:538.49px;top:658.61px"><svg width="12" height="12" viewBox="0 0 12 12"><rect x="2.2" y="0.6" width="7.6" height="10.8" rx="3.8" fill="none" stroke="#707276" stroke-width="1.1"/><path d="M9.3 5V4.4A3.3 3.3 0 0 0 6 1.1V5Z" fill="#707276"/><path d="M2.6 5.2h6.8M6 1v4.2" fill="none" stroke="#707276" stroke-width="0.9" stroke-linecap="round" stroke-linejoin="round"/></svg></div>
<div class="key " style="left:569.30px;top:658.61px"><svg width="12" height="12" viewBox="0 0 12 12"><rect x="2.2" y="0.6" width="7.6" height="10.8" rx="3.8" fill="none" stroke="#707276" stroke-width="1.1"/><path d="M2.6 5.2h6.8M6 2.2v1.8" fill="none" stroke="#707276" stroke-width="0.9" stroke-linecap="round" stroke-linejoin="round"/></svg></div>
<div class="key " style="left:600.10px;top:658.61px"><svg width="12" height="12" viewBox="0 0 12 12"><path d="M6 1.2C3.6 1.2 2.4 3 2.4 5V7.4C2.4 9.6 3.8 11 6 11S9.6 9.6 9.6 7.4V5C9.6 3 8.4 1.2 6 1.2ZM2.4 5.2h7.2" fill="none" stroke="#707276" stroke-width="1.1" stroke-linecap="round" stroke-linejoin="round"/><circle cx="1.7" cy="4.2" r="0.8" fill="#707276"/></svg></div>
<div class="key " style="left:630.91px;top:658.61px"><svg width="12" height="12" viewBox="0 0 12 12"><path d="M6 1.2C3.6 1.2 2.4 3 2.4 5V7.4C2.4 9.6 3.8 11 6 11S9.6 9.6 9.6 7.4V5C9.6 3 8.4 1.2 6 1.2ZM2.4 6.6h7.2" fill="none" stroke="#707276" stroke-width="1.1" stroke-linecap="round" stroke-linejoin="round"/><circle cx="1.7" cy="7.6" r="0.8" fill="#707276"/></svg></div>
<div class="key " style="left:661.71px;top:658.61px"><svg width="12" height="12" viewBox="0 0 12 12"><path d="M6 .4 9.4 4.2H7.2V6H4.8V4.2H2.6Z" fill="#707276"/><circle cx="6" cy="9.2" r="1.7" fill="#707276"/></svg></div>
<div class="key " style="left:692.52px;top:658.61px"><svg width="12" height="12" viewBox="0 0 12 12"><circle cx="6" cy="2.8" r="1.7" fill="#707276"/><path d="M6 11.6 9.4 7.8H7.2V6H4.8V7.8H2.6Z" fill="#707276"/></svg></div>
<div class="key " style="left:723.33px;top:658.61px"><svg width="12" height="12" viewBox="0 0 12 12"><path d="M1.4 2.2 6.4 6 1.4 9.8Z" fill="#707276"/><rect x="7.4" y="2.2" width="1.3" height="7.6" rx="0" fill="#707276"/><rect x="9.6" y="2.2" width="1.3" height="7.6" rx="0" fill="#707276"/></svg></div>
<div class="key " style="left:76.40px;top:689.41px"><svg width="12" height="12" viewBox="0 0 12 12"><path d="M1.6 4H3.6L7 1.2V10.8L3.6 8H1.6Z" fill="#707276"/><path d="M2 1.6 10 10.4" fill="none" stroke="#707276" stroke-width="1.2" stroke-linecap="round" stroke-linejoin="round"/><path d="M2 1.6 10 10.4" fill="none" stroke="#e4e7ed" stroke-width="0.5" stroke-linecap="round" stroke-linejoin="round"/></svg></div>
<div class="key " style="left:107.21px;top:689.41px"><svg width="12" height="12" viewBox="0 0 12 12"><rect x="2" y="2" width="8" height="8" rx="0.4" fill="#707276"/></svg></div>
<div class="key " style="left:138.01px;top:689.41px"><svg width="12" height="12" viewBox="0 0 12 12"><path d="M5.6 2.4V9.6L.8 6Z" fill="#707276"/><path d="M11 2.4V9.6L6.2 6Z" fill="#707276"/></svg></div>
<div class="key " style="left:168.82px;top:689.41px"><svg width="12" height="12" viewBox="0 0 12 12"><path d="M6.4 2.4V9.6L11.2 6Z" fill="#707276"/><path d="M1 2.4V9.6L5.8 6Z" fill="#707276"/></svg></div>
<div class="key " style="left:199.62px;top:689.41px"><svg width="12" height="12" viewBox="0 0 12 12"><path d="M1.2 4H3.4L6.4 1.4V10.6L3.4 8H1.2Z" fill="#707276"/><path d="M7.8 6h3M9.3 4.5v3" fill="none" stroke="#707276" stroke-width="0.8" stroke-linecap="round" stroke-linejoin="round"/></svg></div>
<div class="key " style="left:230.43px;top:689.41px"><svg width="12" height="12" viewBox="0 0 12 12"><path d="M1.2 4H3.4L6.4 1.4V10.6L3.4 8H1.2Z" fill="#707276"/><path d="M7.6 6h3.4" fill="none" stroke="#707276" stroke-width="1" stroke-linecap="round" stroke-linejoin="round"/></svg></div>
<div class="key " style="left:261.24px;top:689.41px"><svg width="12" height="12" viewBox="0 0 12 12"><rect x="1.2" y="1.6" width="9.6" height="8.8" rx="0.8" fill="none" stroke="#707276" stroke-width="1.1"/><path d="M1.6 3.4h8.8M3.4 5.6h5.2M3.4 7.6h3.6" fill="none" stroke="#707276" stroke-width="0.9" stroke-linecap="round" stroke-linejoin="round"/></svg></div>
<div class="key " style="left:292.04px;top:689.41px"><svg width="12" height="12" viewBox="0 0 12 12"><rect x="1.3" y="1.3" width="3.8" height="3.8" rx="0.4" fill="none" stroke="#707276" stroke-width="1.6"/><rect x="6.9" y="1.3" width="3.8" height="3.8" rx="0.4" fill="none" stroke="#707276" stroke-width="1.6"/><rect x="1.3" y="6.9" width="3.8" height="3.8" rx="0.4" fill="none" stroke="#707276" stroke-width="1.6"/><rect x="6.9" y="6.9" width="3.8" height="3.8" rx="0.4" fill="none" stroke="#707276" stroke-width="1.6"/></svg></div>
<div class="key " style="left:322.85px;top:689.41px"><svg width="12" height="12" viewBox="0 0 12 12"><path d="M.8 2.4H11.2V9.8C11.2 10.2 10.9 10.4 10.6 10.4H1.4C1.1 10.4.8 10.2.8 9.8Z" fill="#707276"/><path d="M1.2 2.8 6 6.8 10.8 2.8" fill="none" stroke="#e4e7ed" stroke-width="1" stroke-linecap="round" stroke-linejoin="round"/></svg></div>
<div class="key " style="left:353.65px;top:689.41px"><svg width="12" height="12" viewBox="0 0 12 12"><rect x="0.5" y="3" width="3.8" height="8.4" rx="0.5" fill="#707276"/><rect x="4.2" y="1.4" width="7.2" height="6" rx="0.5" fill="none" stroke="#707276" stroke-width="1.2"/><path d="M6.8 9.6h3" fill="none" stroke="#707276" stroke-width="1.1" stroke-linecap="round" stroke-linejoin="round"/><path d="M1.3 5h2.2M1.3 6.8h2.2" fill="none" stroke="#e4e7ed" stroke-width="0.7" stroke-linecap="round" stroke-linejoin="round"/></svg></div>
<div class="key " style="left:384.46px;top:689.41px"><svg width="12" height="12" viewBox="0 0 12 12"><path d="M.8 2.2C.8 1.8 1.1 1.5 1.5 1.5H4.6L5.9 3H10.5C10.9 3 11.2 3.3 11.2 3.7V10.3C11.2 10.7 10.9 11 10.5 11H1.5C1.1 11 .8 10.7.8 10.3Z" fill="#707276"/><path d="M6 4.9 6.6 6.2 7.9 6.3 6.9 7.2 7.2 8.6 6 7.9 4.8 8.6 5.1 7.2 4.1 6.3 5.4 6.2Z" fill="#e4e7ed"/></svg></div>
<div class="key " style="left:415.27px;top:689.41px"><svg width="12" height="12" viewBox="0 0 12 12"><path d="M6 .8 10.8 2.4V6C10.8 8.6 8.8 10.6 6 11.4 3.2 10.6 1.2 8.6 1.2 6V2.4Z" fill="#707276"/><path d="M6 2 9.6 3.2V6H6Z" fill="#e4e7ed"/><path d="M6 6H2.4C2.6 8 4 9.6 6 10.2Z" fill="#e4e7ed"/></svg></div>
<div class="key " style="left:446.07px;top:689.41px"><svg width="12" height="12" viewBox="0 0 12 12"><rect x="1" y="1.4" width="10" height="2.6" rx="1" fill="#707276"/><rect x="1" y="4.7" width="10" height="2.6" rx="1" fill="#707276"/><rect x="1" y="8" width="10" height="2.6" rx="1" fill="#707276"/><circle cx="2.6" cy="2.7" r="0.5" fill="#e4e7ed"/><circle cx="2.6" cy="6" r="0.5" fill="#e4e7ed"/><circle cx="2.6" cy="9.3" r="0.5" fill="#e4e7ed"/></svg></div>
<div class="key " style="left:476.88px;top:689.41px"><svg width="12" height="12" viewBox="0 0 12 12"><circle cx="6" cy="6" r="2.1" fill="#707276"/><path d="M6 .4v2.2M6 9.4v2.2M.4 6h2.2M9.4 6h2.2M2 2l1.5 1.5M8.5 8.5 10 10M10 2 8.5 3.5M3.5 8.5 2 10" fill="none" stroke="#707276" stroke-width="0.9" stroke-linecap="round" stroke-linejoin="round"/></svg></div>
<div class="key " style="left:507.68px;top:689.41px"><svg width="12" height="12" viewBox="0 0 12 12"><circle cx="6" cy="6" r="3.1" fill="#707276"/><circle cx="6" cy="0.9" r="0.6" fill="#707276"/><circle cx="6" cy="11.1" r="0.6" fill="#707276"/><circle cx="0.9" cy="6" r="0.6" fill="#707276"/><circle cx="11.1" cy="6" r="0.6" fill="#707276"/><circle cx="2.4" cy="2.4" r="0.6" fill="#707276"/><circle cx="9.6" cy="9.6" r="0.6" fill="#707276"/><circle cx="9.6" cy="2.4" r="0.6" fill="#707276"/><circle cx="2.4" cy="9.6" r="0.6" fill="#707276"/></svg></div>
<div class="key " style="left:538.49px;top:689.41px"><svg width="12" height="12" viewBox="0 0 12 12"><circle cx="5" cy="5" r="3.9" fill="none" stroke="#707276" stroke-width="1.1"/><path d="M7.9 7.9 10.9 10.9" fill="none" stroke="#707276" stroke-width="1.1" stroke-linecap="round" stroke-linejoin="round"/></svg></div>
<div class="key " style="left:569.30px;top:689.41px"><svg width="12" height="12" viewBox="0 0 12 12"><path d="M.6 8.4C1.1 5 3.6 3.2 6.8 3L6.1.6 11.8 2 8.4 6.8 7.6 5C5 5.2 2.8 6.4.6 8.4Z" fill="#707276"/><path d="M11.8 3.6C11.3 7 8.8 8.8 5.6 9L6.3 11.4.6 10 4 5.2 4.8 7C7.4 6.8 9.6 5.6 11.8 3.6Z" fill="#707276"/></svg></div>
<div class="key " style="left:600.10px;top:689.41px"><svg width="14" height="14" viewBox="0 0 14 14"><path d="M7 2.1a4.9 4.9 0 0 0-2.9 8.8c.4.3.6.6.6 1v.5h4.6v-.5c0-.4.2-.7.6-1A4.9 4.9 0 0 0 7 2.1z" fill="#707276"/><rect x="5.5" y="12.6" width="3" height="1" rx="0.4" fill="#707276"/><path d="M7 .3v1.1M2.2 2.3l.8.8M11.8 2.3l-.8.8M.3 7h1.2M12.5 7h1.2" fill="none" stroke="#707276" stroke-width="0.7" stroke-linecap="round" stroke-linejoin="round"/><path d="M4.6 6h4.6M7.8 4.6l1.4 1.4M9.4 8H4.8M6.2 9.4 4.8 8" fill="none" stroke="#e4e7ed" stroke-width="0.9" stroke-linecap="round" stroke-linejoin="round"/></svg></div>
<div class="key " style="left:630.91px;top:689.41px"><svg width="14" height="14" viewBox="0 0 14 14"><path d="M7 2.1a4.9 4.9 0 0 0-2.9 8.8c.4.3.6.6.6 1v.5h4.6v-.5c0-.4.2-.7.6-1A4.9 4.9 0 0 0 7 2.1z" fill="#707276"/><rect x="5.5" y="12.6" width="3" height="1" rx="0.4" fill="#707276"/><path d="M7 .3v1.1M2.2 2.3l.8.8M11.8 2.3l-.8.8M.3 7h1.2M12.5 7h1.2" fill="none" stroke="#707276" stroke-width="0.7" stroke-linecap="round" stroke-linejoin="round"/><path d="M9.4 6H4.8M6.2 4.6 4.8 6M4.6 8h4.6M7.8 9.4 9.2 8" fill="none" stroke="#e4e7ed" stroke-width="0.9" stroke-linecap="round" stroke-linejoin="round"/></svg></div>
<div class="key " style="left:661.71px;top:689.41px"><svg width="14" height="14" viewBox="0 0 14 14"><path d="M7 2.1a4.9 4.9 0 0 0-2.9 8.8c.4.3.6.6.6 1v.5h4.6v-.5c0-.4.2-.7.6-1A4.9 4.9 0 0 0 7 2.1z" fill="#707276"/><rect x="5.5" y="12.6" width="3" height="1" rx="0.4" fill="#707276"/><path d="M7 .3v1.1M2.2 2.3l.8.8M11.8 2.3l-.8.8M.3 7h1.2M12.5 7h1.2" fill="none" stroke="#707276" stroke-width="0.7" stroke-linecap="round" stroke-linejoin="round"/><path d="M7 4.8v4.4M4.8 7h4.4" fill="none" stroke="#e4e7ed" stroke-width="1" stroke-linecap="round" stroke-linejoin="round"/></svg></div>
<div class="key " style="left:692.52px;top:689.41px"><svg width="14" height="14" viewBox="0 0 14 14"><path d="M7 2.1a4.9 4.9 0 0 0-2.9 8.8c.4.3.6.6.6 1v.5h4.6v-.5c0-.4.2-.7.6-1A4.9 4.9 0 0 0 7 2.1z" fill="#707276"/><rect x="5.5" y="12.6" width="3" height="1" rx="0.4" fill="#707276"/><path d="M7 .3v1.1M2.2 2.3l.8.8M11.8 2.3l-.8.8M.3 7h1.2M12.5 7h1.2" fill="none" stroke="#707276" stroke-width="0.7" stroke-linecap="round" stroke-linejoin="round"/><path d="M4.8 7h4.4" fill="none" stroke="#e4e7ed" stroke-width="1.1" stroke-linecap="round" stroke-linejoin="round"/></svg></div>
<div class="key " style="left:723.33px;top:689.41px"><svg width="14" height="14" viewBox="0 0 14 14"><path d="M7 2.1a4.9 4.9 0 0 0-2.9 8.8c.4.3.6.6.6 1v.5h4.6v-.5c0-.4.2-.7.6-1A4.9 4.9 0 0 0 7 2.1z" fill="#707276"/><rect x="5.5" y="12.6" width="3" height="1" rx="0.4" fill="#707276"/><path d="M7 .3v1.1M2.2 2.3l.8.8M11.8 2.3l-.8.8M.3 7h1.2M12.5 7h1.2" fill="none" stroke="#707276" stroke-width="0.7" stroke-linecap="round" stroke-linejoin="round"/><path d="M7 9.6V4.6M5.2 6.4 7 4.6 8.8 6.4" fill="none" stroke="#e4e7ed" stroke-width="0.9" stroke-linecap="round" stroke-linejoin="round"/></svg></div>
<div class="key " style="left:76.40px;top:720.22px"><svg width="14" height="14" viewBox="0 0 14 14"><path d="M7 2.1a4.9 4.9 0 0 0-2.9 8.8c.4.3.6.6.6 1v.5h4.6v-.5c0-.4.2-.7.6-1A4.9 4.9 0 0 0 7 2.1z" fill="#707276"/><rect x="5.5" y="12.6" width="3" height="1" rx="0.4" fill="#707276"/><path d="M7 .3v1.1M2.2 2.3l.8.8M11.8 2.3l-.8.8M.3 7h1.2M12.5 7h1.2" fill="none" stroke="#707276" stroke-width="0.7" stroke-linecap="round" stroke-linejoin="round"/><path d="M7 4.2v5.2M5.2 7.6 7 9.4 8.8 7.6" fill="none" stroke="#e4e7ed" stroke-width="0.9" stroke-linecap="round" stroke-linejoin="round"/></svg></div>
<div class="key " style="left:107.21px;top:720.22px"><svg width="14" height="14" viewBox="0 0 14 14"><path d="M7 2.1a4.9 4.9 0 0 0-2.9 8.8c.4.3.6.6.6 1v.5h4.6v-.5c0-.4.2-.7.6-1A4.9 4.9 0 0 0 7 2.1z" fill="#707276"/><rect x="5.5" y="12.6" width="3" height="1" rx="0.4" fill="#707276"/><path d="M7 .3v1.1M2.2 2.3l.8.8M11.8 2.3l-.8.8M.3 7h1.2M12.5 7h1.2" fill="none" stroke="#707276" stroke-width="0.7" stroke-linecap="round" stroke-linejoin="round"/><path d="M8.6 4.4H6.2C5.5 4.4 5.2 5 5.2 5.4S5.6 6.5 6.3 6.7L7.7 7.2C8.4 7.4 8.8 7.9 8.8 8.4S8.4 9.7 7.7 9.7H5.2" fill="none" stroke="#e4e7ed" stroke-width="0.9" stroke-linecap="round" stroke-linejoin="round"/></svg></div>
<div class="key " style="left:138.01px;top:720.22px"><svg width="14" height="14" viewBox="0 0 14 14"><path d="M7 2.1a4.9 4.9 0 0 0-2.9 8.8c.4.3.6.6.6 1v.5h4.6v-.5c0-.4.2-.7.6-1A4.9 4.9 0 0 0 7 2.1z" fill="#707276"/><rect x="5.5" y="12.6" width="3" height="1" rx="0.4" fill="#707276"/><path d="M7 .3v1.1M2.2 2.3l.8.8M11.8 2.3l-.8.8M.3 7h1.2M12.5 7h1.2" fill="none" stroke="#707276" stroke-width="0.7" stroke-linecap="round" stroke-linejoin="round"/><path d="M5.6 5.2C5.6 4.3 6.3 3.8 7 3.8S8.4 4.3 8.4 5.2C8.4 6.3 7 6.5 7 7.6M7 8.8v1" fill="none" stroke="#e4e7ed" stroke-width="1" stroke-linecap="round" stroke-linejoin="round"/></svg></div>
<div class="key " style="left:168.82px;top:720.22px"><svg width="14" height="14" viewBox="0 0 14 14"><path d="M7 2.1a4.9 4.9 0 0 0-2.9 8.8c.4.3.6.6.6 1v.5h4.6v-.5c0-.4.2-.7.6-1A4.9 4.9 0 0 0 7 2.1z" fill="#707276"/><rect x="5.5" y="12.6" width="3" height="1" rx="0.4" fill="#707276"/><path d="M7 .3v1.1M2.2 2.3l.8.8M11.8 2.3l-.8.8M.3 7h1.2M12.5 7h1.2" fill="none" stroke="#707276" stroke-width="0.7" stroke-linecap="round" stroke-linejoin="round"/><path d="M5 5.4A2.9 2.9 0 1 0 9 5.4M7 3.8v3" fill="none" stroke="#e4e7ed" stroke-width="0.9" stroke-linecap="round" stroke-linejoin="round"/></svg></div>
<div class="key " style="left:199.62px;top:720.22px"><svg width="14" height="14" viewBox="0 0 14 14"><path d="M2.2 13.6V9.2a4.8 4.8 0 0 1 9.6 0v4.4z" fill="#707276"/><path d="M7 .5v2M2.2 2.6l1.3 1.2M11.8 2.6l-1.3 1.2" fill="none" stroke="#707276" stroke-width="0.8" stroke-linecap="round" stroke-linejoin="round"/><path d="M5.2 9h3.6M5.2 11h3.6M6.4 7.8 5.8 12.2M8.2 7.8 7.6 12.2" fill="none" stroke="#e4e7ed" stroke-width="0.7" stroke-linecap="round" stroke-linejoin="round"/></svg></div>
<div class="key " style="left:230.43px;top:720.22px"><svg width="14" height="14" viewBox="0 0 14 14"><path d="M2.2 13.6V9.2a4.8 4.8 0 0 1 9.6 0v4.4z" fill="#707276"/><path d="M7 .5v2M2.2 2.6l1.3 1.2M11.8 2.6l-1.3 1.2" fill="none" stroke="#707276" stroke-width="0.8" stroke-linecap="round" stroke-linejoin="round"/><path d="M7 8v4M5 10h4" fill="none" stroke="#e4e7ed" stroke-width="1" stroke-linecap="round" stroke-linejoin="round"/></svg></div>
<div class="key " style="left:261.24px;top:720.22px"><svg width="14" height="14" viewBox="0 0 14 14"><path d="M2.2 13.6V9.2a4.8 4.8 0 0 1 9.6 0v4.4z" fill="#707276"/><path d="M7 .5v2M2.2 2.6l1.3 1.2M11.8 2.6l-1.3 1.2" fill="none" stroke="#707276" stroke-width="0.8" stroke-linecap="round" stroke-linejoin="round"/><path d="M5 10.2h4" fill="none" stroke="#e4e7ed" stroke-width="1.1" stroke-linecap="round" stroke-linejoin="round"/></svg></div>
<div class="key " style="left:292.04px;top:720.22px"><svg width="14" height="14" viewBox="0 0 14 14"><path d="M2.2 13.6V9.2a4.8 4.8 0 0 1 9.6 0v4.4z" fill="#707276"/><path d="M7 .5v2M2.2 2.6l1.3 1.2M11.8 2.6l-1.3 1.2" fill="none" stroke="#707276" stroke-width="0.8" stroke-linecap="round" stroke-linejoin="round"/><path d="M7 12.2V7.8M5 9.8 7 7.8 9 9.8" fill="none" stroke="#e4e7ed" stroke-width="1.1" stroke-linecap="round" stroke-linejoin="round"/></svg></div>
<div class="key " style="left:322.85px;top:720.22px"><svg width="14" height="14" viewBox="0 0 14 14"><path d="M2.2 13.6V9.2a4.8 4.8 0 0 1 9.6 0v4.4z" fill="#707276"/><path d="M7 .5v2M2.2 2.6l1.3 1.2M11.8 2.6l-1.3 1.2" fill="none" stroke="#707276" stroke-width="0.8" stroke-linecap="round" stroke-linejoin="round"/><path d="M7 7.6V12M5 10 7 12 9 10" fill="none" stroke="#e4e7ed" stroke-width="1.1" stroke-linecap="round" stroke-linejoin="round"/></svg></div>
<div class="key " style="left:353.65px;top:720.22px"><svg width="14" height="14" viewBox="0 0 14 14"><path d="M2.2 13.6V9.2a4.8 4.8 0 0 1 9.6 0v4.4z" fill="#707276"/><path d="M7 .5v2M2.2 2.6l1.3 1.2M11.8 2.6l-1.3 1.2" fill="none" stroke="#707276" stroke-width="0.8" stroke-linecap="round" stroke-linejoin="round"/><path d="M7.8 6.8 5.2 10.4H7L6.2 13 8.8 9.4H7Z" fill="#e4e7ed"/></svg></div>
<div class="key " style="left:384.46px;top:720.22px"><svg width="14" height="14" viewBox="0 0 14 14"><path d="M2.2 13.6V9.2a4.8 4.8 0 0 1 9.6 0v4.4z" fill="#707276"/><path d="M7 .5v2M2.2 2.6l1.3 1.2M11.8 2.6l-1.3 1.2" fill="none" stroke="#707276" stroke-width="0.8" stroke-linecap="round" stroke-linejoin="round"/><path d="M7 7.2 9.4 9.8 7 12.4 4.6 9.8Z" fill="#e4e7ed"/><rect x="6.3" y="9.1" width="1.4" height="1.4" rx="0" fill="#707276"/></svg></div>
<div class="key " style="left:415.27px;top:720.22px"><svg width="14" height="14" viewBox="0 0 14 14"><rect x="1.2" y="0.8" width="11.6" height="9.4" rx="0.8" fill="#707276"/><path d="M5.4 3.6A2.5 2.5 0 1 0 8.6 3.6M7 2.4v2.8" fill="none" stroke="#e4e7ed" stroke-width="1" stroke-linecap="round" stroke-linejoin="round"/><path d="M2 12.9h.8M3.9 12.9h.8M5.8 12.9h.8M7.7 12.9h.8M9.6 12.9h.8M11.3 12.9h.8" fill="none" stroke="#707276" stroke-width="0.9" stroke-linecap="round" stroke-linejoin="round"/></svg></div>
<div class="key " style="left:446.07px;top:720.22px"><svg width="12" height="12" viewBox="0 0 12 12"><rect x="2.6" y="2.6" width="6.8" height="6.8" rx="1" fill="none" stroke="#707276" stroke-width="1.1"/><rect x="4.2" y="4.2" width="3.6" height="3.6" rx="0.3" fill="#707276"/><path d="M4.4 .8v1.6M6 .8v1.6M7.6 .8v1.6M4.4 9.6v1.6M6 9.6v1.6M7.6 9.6v1.6M.8 4.4h1.6M.8 6h1.6M.8 7.6h1.6M9.6 4.4h1.6M9.6 6h1.6M9.6 7.6h1.6" fill="none" stroke="#707276" stroke-width="0.8" stroke-linecap="round" stroke-linejoin="round"/></svg></div>
<div class="abs" style="left:776px;top:280.5px;font-size:10.3px;font-weight:bold;line-height:12px;color:#1a1a1a">マクロ</div>
<div class="abs" style="left:776px;top:295.5px;width:240px;font-size:8px;line-height:10.2px;color:#9a9a9a">マクロをドラッグまたはクリックし、ターゲットデバイスのボタ<br>ンに割り当ててください。</div>
<div class="hl" style="left:775.5px;top:325px;width:235.5px"></div>
<div class="mac" style="top:325.50px"><b>M</b><span>M1</span></div>
<div class="mac" style="top:352.38px"><b>M</b><span>M2</span></div>
<div class="mac" style="top:379.26px"><b>M</b><span>M3</span></div>
<div class="mac" style="top:406.14px"><b>M</b><span>M4</span></div>
<div class="mac" style="top:433.02px"><b>M</b><span>M5</span></div>
<div class="mac" style="top:459.90px"><b>M</b><span>M6</span></div>
<div class="mac" style="top:486.78px"><b>M</b><span>M7</span></div>
<div class="mac" style="top:513.66px"><b>M</b><span>M8</span></div>
<div class="mac" style="top:540.54px"><b>M</b><span>M9</span></div>
<div class="mac" style="top:567.42px"><b>M</b><span>M10</span></div>
<div class="mac" style="top:594.30px"><b>M</b><span>M11</span></div>
<div class="mac" style="top:621.18px"><b>M</b><span>M12</span></div>
<div class="mac" style="top:648.06px"><b>M</b><span>M13</span></div>
<div class="mac" style="top:674.94px"><b>M</b><span>M14</span></div>
<div class="mac" style="top:701.82px"><b>M</b><span>M15</span></div>
<div class="mac" style="top:728.70px"><b>M</b><span>M16</span></div>
</body></html>
